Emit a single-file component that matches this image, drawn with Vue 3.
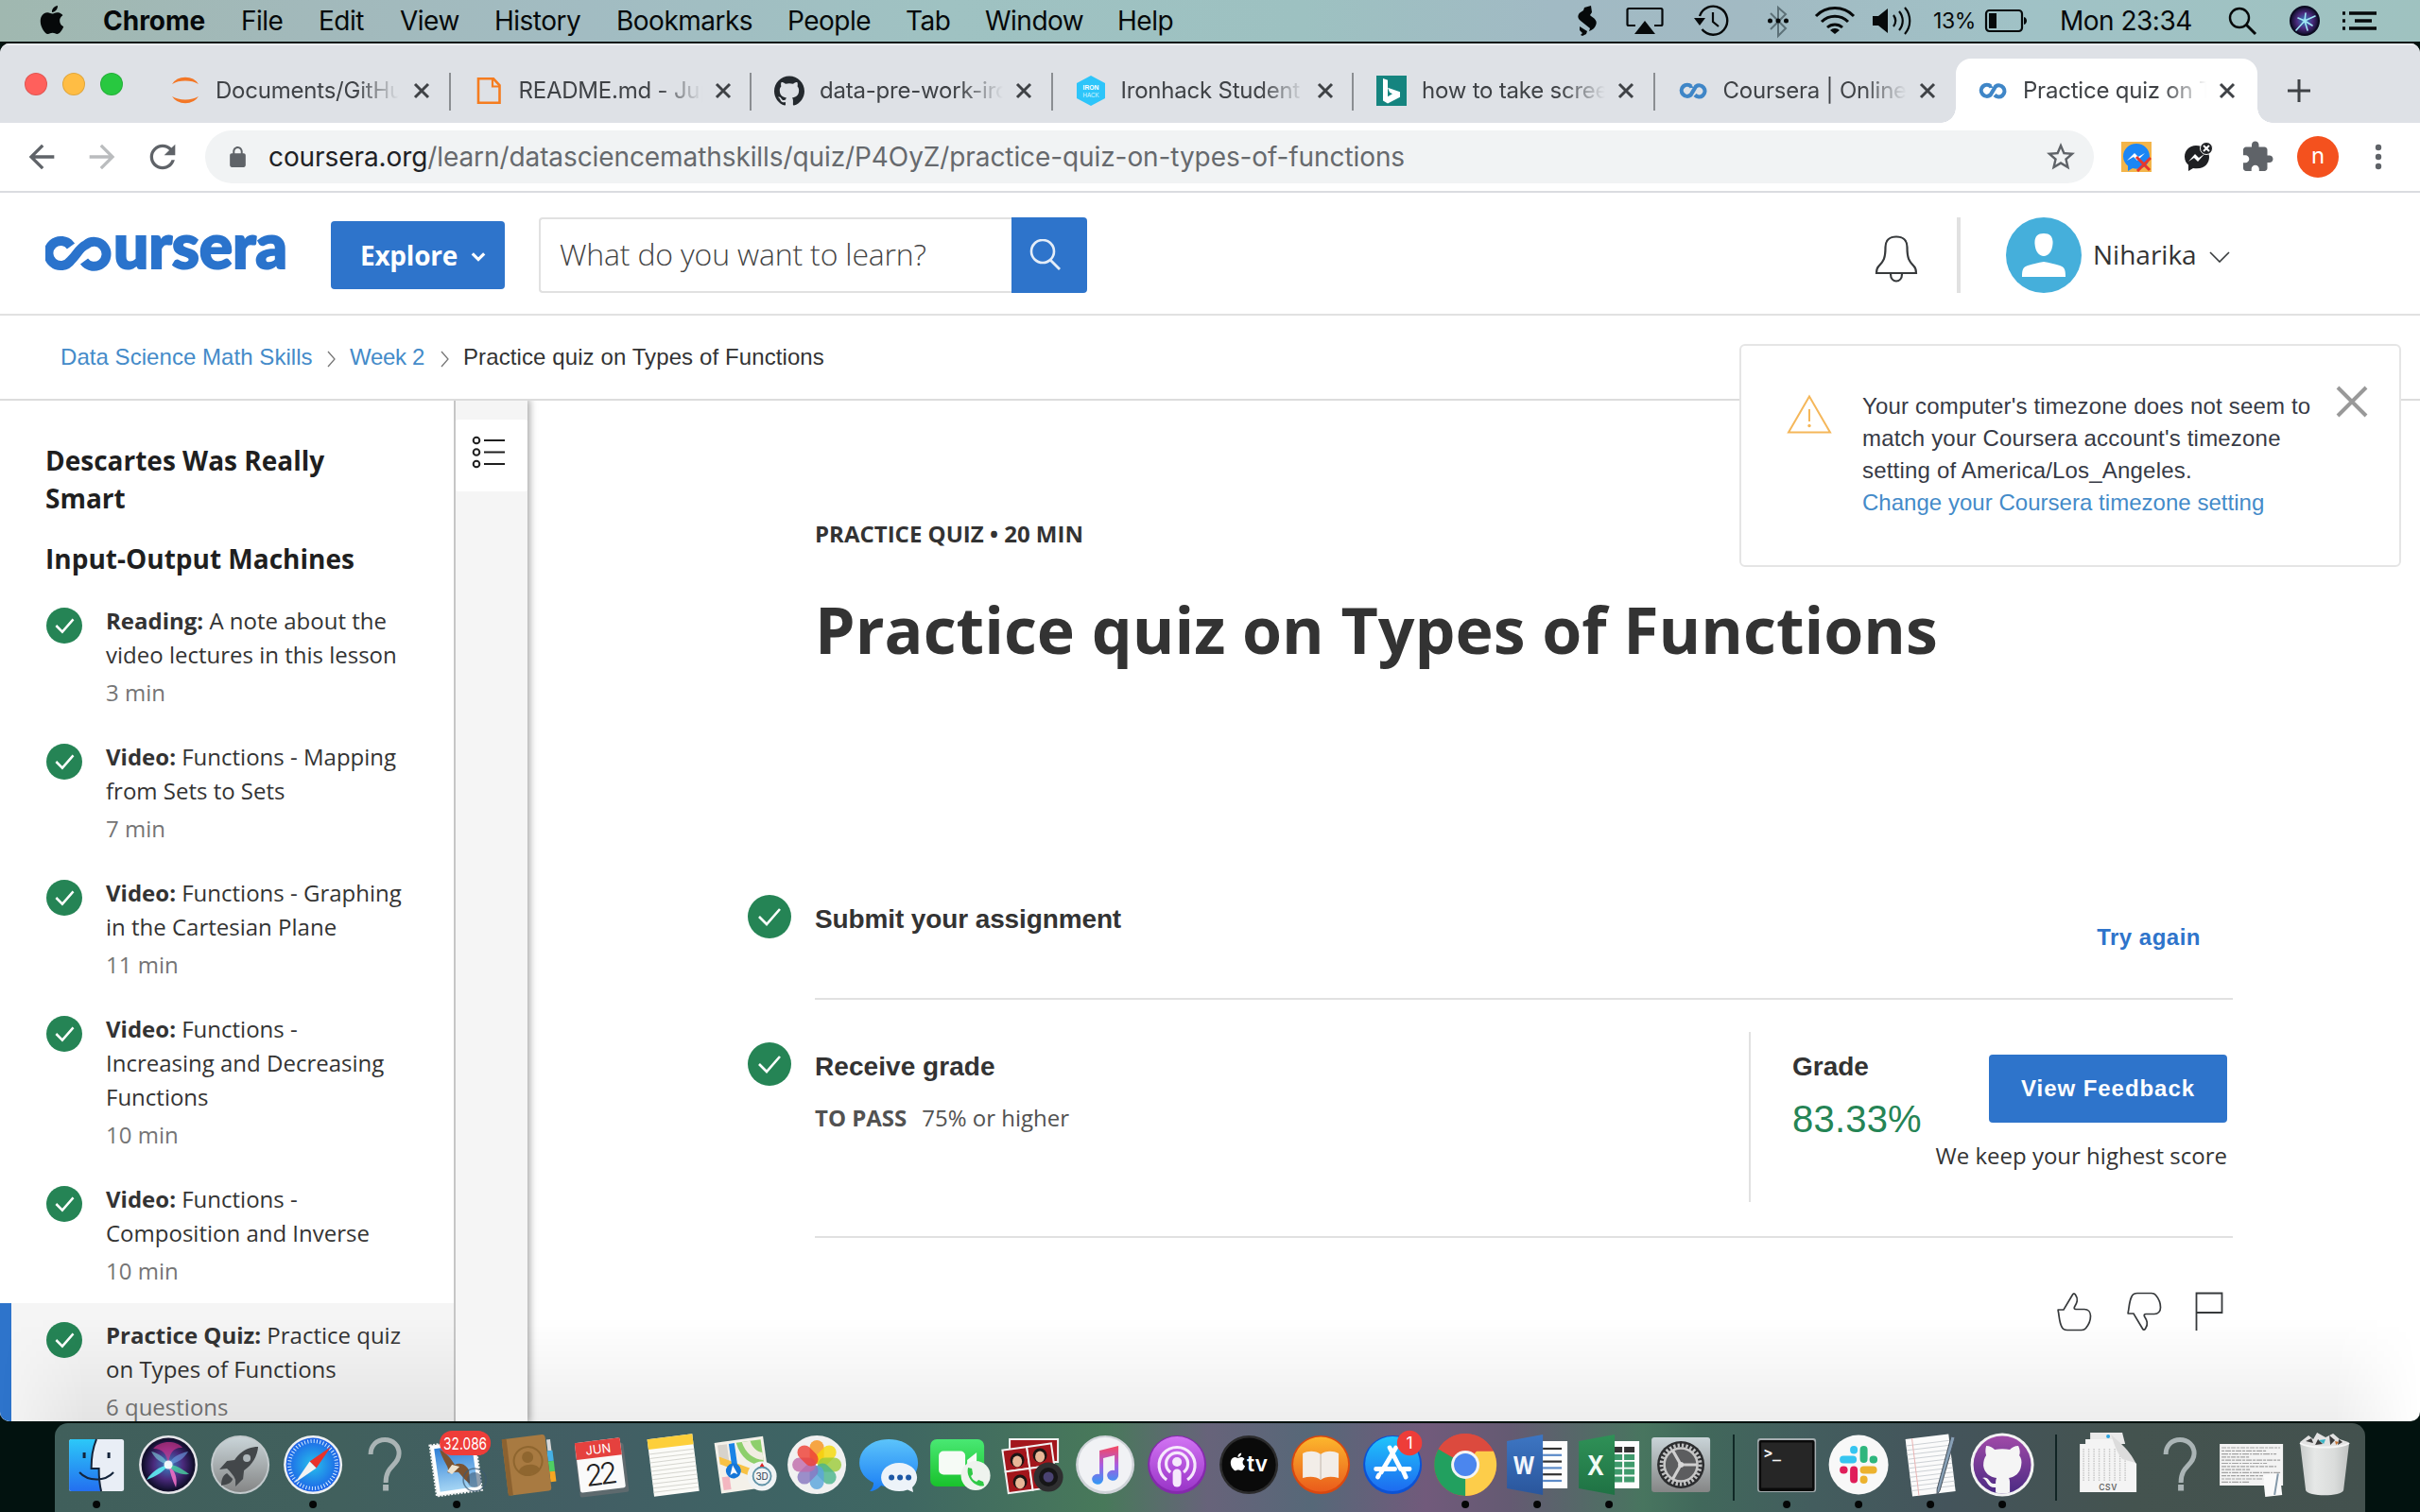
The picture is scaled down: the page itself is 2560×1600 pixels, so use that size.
<script setup>
const menus = ['Chrome', 'File', 'Edit', 'View', 'History', 'Bookmarks', 'People', 'Tab', 'Window', 'Help']

const tabs = [
  { icon: 'jupyter', title: 'Documents/GitHub' },
  { icon: 'file', title: 'README.md - Jupyter' },
  { icon: 'github', title: 'data-pre-work-ironhack' },
  { icon: 'ironhack', title: 'Ironhack Student Portal' },
  { icon: 'bing', title: 'how to take screenshot' },
  { icon: 'coursera', title: 'Coursera | Online Courses' },
  { icon: 'coursera', title: 'Practice quiz on Types', active: true }
]

const lessons = [
  { kind: 'Reading', text: 'A note about the\nvideo lectures in this lesson', meta: '3 min' },
  { kind: 'Video', text: 'Functions - Mapping\nfrom Sets to Sets', meta: '7 min' },
  { kind: 'Video', text: 'Functions - Graphing\nin the Cartesian Plane', meta: '11 min' },
  { kind: 'Video', text: 'Functions -\nIncreasing and Decreasing\nFunctions', meta: '10 min' },
  { kind: 'Video', text: 'Functions -\nComposition and Inverse', meta: '10 min' },
  { kind: 'Practice Quiz', text: 'Practice quiz\non Types of Functions', meta: '6 questions', current: true }
]

const dock = [
  { id: 'finder', run: true }, { id: 'siri' }, { id: 'launchpad' }, { id: 'safari', run: true }, { id: 'missing' },
  { id: 'mail', run: true }, { id: 'contacts' }, { id: 'calendar' }, { id: 'notes' }, { id: 'maps' }, { id: 'photos' },
  { id: 'messages' }, { id: 'facetime' }, { id: 'photobooth' }, { id: 'music' }, { id: 'podcasts' }, { id: 'tv' },
  { id: 'books' }, { id: 'appstore' }, { id: 'chrome', run: true }, { id: 'word', run: true }, { id: 'excel', run: true },
  { id: 'settings' }, { id: 'divider' }, { id: 'terminal', run: true }, { id: 'slack', run: true },
  { id: 'textedit', run: true }, { id: 'githubapp', run: true }, { id: 'divider' }, { id: 'csv' }, { id: 'missing' },
  { id: 'document' }, { id: 'trash' }
]

const range = (n) => Array.from({ length: n }, (_, i) => i)
const petals = ['#f7941d', '#f5d90a', '#9ccb3b', '#4cb58b', '#5aa5dc', '#8878c0', '#c06cab', '#ee4136']
const applePath = 'M12.152 6.896c-.948 0-2.415-1.078-3.96-1.04-2.04.027-3.91 1.183-4.961 3.014-2.117 3.675-.546 9.103 1.519 12.09 1.013 1.454 2.208 3.09 3.792 3.039 1.52-.065 2.09-.987 3.935-.987 1.831 0 2.35.987 3.96.948 1.637-.026 2.676-1.48 3.676-2.948 1.156-1.688 1.636-3.325 1.662-3.415-.039-.013-3.182-1.221-3.22-4.857-.026-3.04 2.48-4.494 2.597-4.559-1.429-2.09-3.623-2.324-4.39-2.376-2-.156-3.675 1.09-4.61 1.09zM15.53 3.83c.843-1.012 1.4-2.427 1.245-3.83-1.207.052-2.662.805-3.532 1.818-.78.896-1.454 2.338-1.273 3.714 1.338.104 2.715-.688 3.559-1.701'
</script>

<template>
  <div class="desktop">
    <header class="menubar">
      <svg class="apple" viewBox="0 0 24 24"><path :d="applePath" /></svg>
      <nav class="menus"><span v-for="m in menus" :key="m">{{ m }}</span></nav>
      <div class="status">
        <svg width="28" height="44" viewBox="0 0 28 44"><path d="M19 6l1 7-2 3 1 1c5 3 7 6 5 10-1 3-4 5-7 6l1-3-10-8c-4-3-3-7 0-9l3-2 1-3zM7 28l8 5-1 3-4 2-2-1 2-2-3-3z" fill="#06090a" /></svg>
        <svg width="44" height="44" viewBox="0 0 44 44" class="gap1"><path d="M12 27H5a1.500 1.500 0 0 1-1.500-1.500V10.500A1.500 1.500 0 0 1 5 9h34a1.500 1.500 0 0 1 1.500 1.500v15a1.500 1.500 0 0 1-1.500 1.500h-7" fill="none" stroke="#06090a" stroke-width="2.200" /><path d="M22 22l11 14H11z" fill="#06090a" /></svg>
        <svg width="42" height="44" viewBox="0 0 42 44" class="gap2"><path d="M8 17A15 15 0 1 1 10.500 31" fill="none" stroke="#06090a" stroke-width="2.400" /><path d="M2 19h12l-6 8z" fill="#06090a" /><path d="M22 13v10l6 5" fill="none" stroke="#06090a" stroke-width="2.200" /></svg>
        <svg width="30" height="44" viewBox="0 0 30 44" class="gap3"><path d="M7 14l16 16-8 8V8l8 7L7 31" fill="none" stroke="#5d7178" stroke-width="2" /><path d="M4 22a2.500 2.500 0 1 0 5 0 2.500 2.500 0 1 0-5 0zM12.500 22a2.500 2.500 0 1 0 5 0 2.500 2.500 0 1 0-5 0zM21 22a2.500 2.500 0 1 0 5 0 2.500 2.500 0 1 0-5 0z" fill="#06090a" /></svg>
        <svg width="46" height="44" viewBox="0 0 46 44" class="gap4"><g fill="none" stroke="#06090a" stroke-width="3"><path d="M3 17a28 28 0 0 1 40 0" /><path d="M9 23a20 20 0 0 1 28 0" /><path d="M15 29a12 12 0 0 1 16 0" /></g><path d="M18 32a7 7 0 0 1 10 0l-5 4z" fill="#06090a" /></svg>
        <svg width="50" height="44" viewBox="0 0 50 44" class="gap5"><path d="M3 17h6l10-8v26L9 27H3z" fill="#06090a" /><g fill="none" stroke="#06090a" stroke-width="2.200"><path d="M25 16c3 4 3 8 0 12M31 12c5 6 5 14 0 20M37 8c7 8 7 20 0 28" /></g></svg>
        <span class="pct">13%</span>
        <svg width="48" height="44" viewBox="0 0 48 44"><rect x="3" y="11" width="38" height="22" rx="3.500" fill="none" stroke="#06090a" stroke-width="2.200" /><rect x="6" y="14" width="8" height="16" fill="#06090a" /><path d="M43 18c4 1 4 7 0 8z" fill="#06090a" /></svg>
        <span class="clock">Mon 23:34</span>
        <svg width="34" height="44" viewBox="0 0 34 44"><circle cx="13" cy="19" r="10" fill="none" stroke="#06090a" stroke-width="2.400" /><path d="M20 26l10 10" stroke="#06090a" stroke-width="3" /></svg>
        <svg width="36" height="44" viewBox="0 0 36 44" class="gap6"><circle cx="18" cy="22" r="16" fill="#0b0a20" /><circle cx="18" cy="22" r="14" fill="url(#siriB)" /><path d="M18 22L9 32M18 22l11-5M18 22l-7-3M18 22l3 10M18 22l8 5M18 22l1-8" stroke="#9fe8f5" stroke-width="1.600" stroke-linecap="round" /></svg>
        <svg width="40" height="44" viewBox="0 0 40 44" class="gap7"><path d="M2 14h3M2 22h3M2 30h3M9 14h29M15 22h18M9 30h29" stroke="#06090a" stroke-width="3.600" /></svg>
      </div>
    </header>

    <main class="window">
      <div class="tabstrip">
        <div class="lights"><i class="red"></i><i class="yellow"></i><i class="green"></i></div>
        <div v-for="(t, i) in tabs" :key="i" class="tab" :class="{ active: t.active, divided: i < 5 }">
          <svg class="fav" viewBox="0 0 32 32">
            <template v-if="t.icon === 'jupyter'"><path d="M2 9a16 14 0 0 1 28 0A20 12 0 0 0 2 9zM2 22a16 14 0 0 0 28 0A20 12 0 0 1 2 22z" fill="#f37726" /></template>
            <template v-else-if="t.icon === 'file'"><path d="M5 3.300h16l6.500 7V28.700H5z" fill="none" stroke="#f57c1f" stroke-width="2.600" /><path d="M20 3v8.500h8" fill="none" stroke="#f57c1f" stroke-width="2.200" /></template>
            <template v-else-if="t.icon === 'github'"><path transform="scale(1.333)" d="M12 .297c-6.630 0-12 5.373-12 12 0 5.303 3.438 9.800 8.205 11.385.6.113.82-.258.82-.577 0-.285-.01-1.040-.015-2.040-3.338.724-4.042-1.610-4.042-1.610C4.422 18.070 3.633 17.700 3.633 17.700c-1.087-.744.084-.729.084-.729 1.205.084 1.838 1.236 1.838 1.236 1.070 1.835 2.809 1.305 3.495.998.108-.776.417-1.305.76-1.605-2.665-.3-5.466-1.332-5.466-5.930 0-1.310.465-2.380 1.235-3.220-.135-.303-.54-1.523.105-3.176 0 0 1.005-.322 3.300 1.230.96-.267 1.980-.399 3-.405 1.020.006 2.040.138 3 .405 2.280-1.552 3.285-1.230 3.285-1.230.645 1.653.24 2.873.12 3.176.765.84 1.230 1.910 1.230 3.220 0 4.610-2.805 5.625-5.475 5.920.42.36.81 1.096.81 2.220 0 1.606-.015 2.896-.015 3.286 0 .315.21.69.825.57C20.565 22.092 24 17.592 24 12.297c0-6.627-5.373-12-12-12" fill="#24292e" /></template>
            <template v-else-if="t.icon === 'ironhack'"><path d="M16 0l15 8v16l-15 8-15-8V8z" fill="#2dc5fa" /><text x="16" y="15" font-size="7.500" font-weight="700" text-anchor="middle" fill="#fff" textLength="17" lengthAdjust="spacingAndGlyphs">IRON</text><text x="16" y="22.500" font-size="7.500" text-anchor="middle" fill="#d9f5ff" textLength="17" lengthAdjust="spacingAndGlyphs">HACK</text></template>
            <template v-else-if="t.icon === 'bing'"><rect width="32" height="32" fill="#15847f" /><path d="M7 3l5 1.800v17.500l5-3-3-1.500-2-5 13 4.500v5.500L12 29.500l-5-3z" fill="#fff" /></template>
            <template v-else><path d="M14 11.500A6 6 0 1 0 13.500 20.500L19 11.500A6 6 0 1 1 18 20.500M14 13a2 2 0 0 0-1-1.500" fill="none" stroke="#3f86c7" stroke-width="4.200" /></template>
          </svg>
          <span class="title">{{ t.title }}</span>
          <svg class="x" viewBox="0 0 20 20"><path d="M3 3l14 14M17 3L3 17" stroke="#3f4246" stroke-width="3" /></svg>
        </div>
        <svg class="plus" viewBox="0 0 26 26"><path d="M13 1v24M1 13h24" stroke="#3f4246" stroke-width="3" /></svg>
      </div>

      <div class="toolbar">
        <svg class="nav" viewBox="0 0 24 24"><path fill="#5f6368" d="M20 11H7.830l5.590-5.590L12 4l-8 8 8 8 1.410-1.410L7.830 13H20v-2z" /></svg>
        <svg class="nav" viewBox="0 0 24 24"><path fill="#babcbe" d="M12 4l-1.410 1.410L16.170 11H4v2h12.170l-5.580 5.590L12 20l8-8z" /></svg>
        <svg class="nav" viewBox="0 0 24 24"><path fill="#5f6368" d="M17.650 6.350C16.200 4.900 14.210 4 12 4c-4.420 0-7.990 3.580-7.990 8s3.570 8 7.990 8c3.730 0 6.840-2.550 7.730-6h-2.080c-.82 2.330-3.040 4-5.650 4-3.310 0-6-2.690-6-6s2.690-6 6-6c1.660 0 3.140.69 4.220 1.780L13 11h7V4l-2.350 2.350z" /></svg>
        <div class="omnibox">
          <svg class="lock" viewBox="0 0 24 24"><path fill="#5f6368" d="M18 8h-1V6c0-2.760-2.240-5-5-5S7 3.240 7 6v2H6c-1.100 0-2 .9-2 2v10c0 1.100.9 2 2 2h12c1.100 0 2-.9 2-2V10c0-1.100-.9-2-2-2zM15.100 8H8.900V6c0-1.710 1.390-3.100 3.100-3.100s3.100 1.390 3.100 3.100v2z" /></svg>
          <span class="url"><b>coursera.org</b>/learn/datasciencemathskills/quiz/P4OyZ/practice-quiz-on-types-of-functions</span>
          <svg class="star" viewBox="0 0 24 24"><path fill="#5f6368" d="M22 9.240l-7.190-.62L12 2 9.190 8.630 2 9.240l5.460 4.730L5.820 21 12 17.270 18.180 21l-1.630-7.030L22 9.240zM12 15.400l-3.760 2.270 1-4.280-3.320-2.880 4.380-.38L12 6.100l1.710 4.040 4.380.38-3.320 2.880 1 4.280L12 15.400z" /></svg>
        </div>
        <svg class="ext e1" viewBox="0 0 32 32"><rect width="32" height="32" fill="#f3b54a" /><path d="M16 2C8 2 2 8 2 15.500c0 4 2 7.500 5 10V31l5-3c12 3 18-5 18-12.500C30 8 24 2 16 2z" fill="#1b86f5" /><path d="M6 20l8-8 4 4 7-4-8 8-4-4z" fill="#fff" /><path d="M16 16l14 14M31 17L17 31" stroke="#e8362c" stroke-width="3" /></svg>
        <svg class="ext e2" viewBox="0 0 32 32"><path d="M14 4C7 4 2 9 2 16c0 4 2 7 4 8.500V31l5-3c12 2 17-5 17-12C28 9 22 4 14 4z" fill="#1f2023" /><path d="M6 21l7-8 4 4 6-4-7 8-4-4z" fill="#fff" /><circle cx="25" cy="7" r="6.500" fill="#1f2023" stroke="#fff" stroke-width="1" /><path d="M22 4l6 6M28 4l-6 6" stroke="#fff" stroke-width="2" /></svg>
        <svg class="ext e3" viewBox="0 0 24 24"><path fill="#5f6368" d="M20.500 11H19V7c0-1.100-.9-2-2-2h-4V3.500C13 2.120 11.880 1 10.500 1S8 2.120 8 3.500V5H4c-1.100 0-1.990.9-1.990 2v3.800H3.500c1.490 0 2.700 1.210 2.700 2.700s-1.210 2.700-2.700 2.700H2V20c0 1.100.9 2 2 2h3.800v-1.500c0-1.490 1.210-2.700 2.700-2.700 1.490 0 2.700 1.210 2.700 2.700V22H17c1.100 0 2-.9 2-2v-4h1.500c1.380 0 2.500-1.120 2.500-2.500S21.880 11 20.500 11z" /></svg>
        <span class="profile">n</span>
        <svg class="dots" viewBox="0 0 8 28"><circle cx="4" cy="4" r="3.200" /><circle cx="4" cy="14" r="3.200" /><circle cx="4" cy="24" r="3.200" /></svg>
      </div>

      <div class="page">
        <div class="topnav">
          <div class="logo">
            <svg viewBox="0 0 72 40"><path d="M27 12.500A13 13 0 1 0 27 27.500C33 22 36 14 43 11A13 13 0 1 1 41 28.500" fill="none" stroke="#2a73cc" stroke-width="10" /></svg>
            <span>ursera</span>
          </div>
          <button class="explore">Explore<svg viewBox="0 0 18 12"><path d="M2 2.500l7 7 7-7" fill="none" stroke="#fff" stroke-width="3.600" /></svg></button>
          <div class="search">
            <div class="field">What do you want to learn?</div>
            <button><svg viewBox="0 0 34 34"><circle cx="14" cy="13" r="12" fill="none" stroke="#e4edf8" stroke-width="2.600" /><path d="M22 22l10 10" stroke="#e4edf8" stroke-width="2.800" /></svg></button>
          </div>
          <svg class="bell" viewBox="0 0 46 50"><path d="M23 1.500c-7 0-11.500 4-11.500 11 0 13-2.500 15-7 20C2 35 2 37 2 40h42c0-3 0-5-2.500-7.500-4.500-5-7-7-7-20 0-7-4.500-11-11.500-11z" fill="none" stroke="#373a3c" stroke-width="2.200" /><path d="M17 41c0 5 3 7.500 6 7.500s6-2.500 6-7.500" fill="none" stroke="#373a3c" stroke-width="2.200" /></svg>
          <div class="vr"></div>
          <svg class="avatar" viewBox="0 0 80 80"><circle cx="40" cy="40" r="40" fill="#45afdb" /><path d="M40 17c7 0 10 4 9.500 11-.6 8-4.500 13-9.500 13s-9-5-9.500-13C30 21 33 17 40 17zM17 63c0-8 1-10 6-12 6-2 11-3 17-4 6 1 11 2 17 4 5 2 6 4 6 12z" fill="#fff" /></svg>
          <span class="user">Niharika</span>
          <svg class="chev" viewBox="0 0 22 12"><path d="M1 1l10 10L21 1" fill="none" stroke="#373a3c" stroke-width="1.600" /></svg>
        </div>

        <div class="crumbs">
          <a>Data Science Math Skills</a>
          <svg viewBox="0 0 10 18"><path d="M1 1l7 8-7 8" fill="none" stroke="#777" stroke-width="1.300" /></svg>
          <a class="week">Week 2</a>
          <svg viewBox="0 0 10 18"><path d="M1 1l7 8-7 8" fill="none" stroke="#777" stroke-width="1.300" /></svg>
          <span>Practice quiz on Types of Functions</span>
        </div>

        <div class="body">
          <aside class="sidebar">
            <h2 class="first">Descartes Was Really<br />Smart</h2>
            <h2>Input-Output Machines</h2>
            <div v-for="(l, i) in lessons" :key="i" class="lesson" :class="{ current: l.current }">
              <svg class="check" viewBox="0 0 46 46"><circle cx="23" cy="23" r="23" fill="#258455" /><path d="M12.500 23l8 8 14-16" fill="none" stroke="#fff" stroke-width="3" /></svg>
              <div>
                <p><b>{{ l.kind }}:</b> {{ l.text }}</p>
                <small>{{ l.meta }}</small>
              </div>
            </div>
          </aside>
          <div class="rail">
            <div class="tile"><svg viewBox="0 0 36 36"><g fill="none" stroke="#1f1f1f" stroke-width="2"><circle cx="5" cy="5" r="3.300" /><circle cx="5" cy="17.500" r="3.300" /><circle cx="5" cy="30" r="3.300" /><path d="M13 5h22M13 17.500h22M13 30h22" stroke-width="2.200" /></g></svg></div>
          </div>
          <section class="content">
            <div class="eyebrow">PRACTICE QUIZ • 20 MIN</div>
            <h1>Practice quiz on Types of Functions</h1>
            <div class="step one">
              <svg class="check" viewBox="0 0 46 46"><circle cx="23" cy="23" r="23" fill="#258455" /><path d="M12 23l8 8 14-16" fill="none" stroke="#fff" stroke-width="2.600" /></svg>
              <div class="row"><h3>Submit your assignment</h3><a class="again">Try again</a></div>
            </div>
            <div class="step two">
              <svg class="check" viewBox="0 0 46 46"><circle cx="23" cy="23" r="23" fill="#258455" /><path d="M12 23l8 8 14-16" fill="none" stroke="#fff" stroke-width="2.600" /></svg>
              <div class="row">
                <div class="receive"><h3>Receive grade</h3><p><b>TO PASS</b>75% or higher</p></div>
                <div class="grade">
                  <div class="score"><h3>Grade</h3><span>83.33%</span></div>
                  <div class="feedback"><button>View Feedback</button><span>We keep your highest score</span></div>
                </div>
              </div>
            </div>
            <div class="react">
              <svg width="38" height="42" viewBox="0 0 38 42"><path d="M1.500 19H8L17.500 3c.8-1.500 2-1.500 3 0 3.500 5 1.500 9-1 13-.8 1.500 0 2.500 1.500 2.500h9c4 0 6.500 3 6.500 7 0 5-2.500 10-5 13-1 1.300-2.500 2-4.500 2H12c-3 0-5-1-6-3.500-3-6-2.500-12-4-18z" fill="none" stroke="#373a3c" stroke-width="1.700" /></svg>
              <svg class="down" width="38" height="42" viewBox="0 0 38 42"><path d="M1.500 19H8L17.500 3c.8-1.500 2-1.500 3 0 3.500 5 1.500 9-1 13-.8 1.500 0 2.500 1.500 2.500h9c4 0 6.500 3 6.500 7 0 5-2.500 10-5 13-1 1.300-2.500 2-4.500 2H12c-3 0-5-1-6-3.500-3-6-2.500-12-4-18z" fill="none" stroke="#373a3c" stroke-width="1.700" /></svg>
              <svg width="30" height="42" viewBox="0 0 30 42"><path d="M1.500 41V1.500h27v20.500H1.500" fill="none" stroke="#373a3c" stroke-width="1.800" /></svg>
            </div>
          </section>
        </div>

        <div class="toast">
          <svg class="warn" viewBox="0 0 48 42"><path d="M24 2.500L46 40.500H2z" fill="none" stroke="#f5b75a" stroke-width="2" /><path d="M24 16v13" stroke="#f5b75a" stroke-width="2" /><circle cx="24" cy="33.500" r="1.700" fill="#f5b75a" /></svg>
          <div class="msg"><span>Your computer's timezone does not seem to</span><span>match your Coursera account's timezone</span><span>setting of America/Los_Angeles.</span><a>Change your Coursera timezone setting</a></div>
          <svg class="close" viewBox="0 0 34 34"><path d="M2 2l30 30M32 2L2 32" stroke="#999" stroke-width="4" /></svg>
        </div>
        <div class="shade"></div>
      </div>
    </main>

    <footer class="dock">
      <template v-for="(d, i) in dock" :key="i">
        <i v-if="d.id === 'divider'" class="divider"></i>
        <svg v-else class="app" viewBox="0 0 76 94">
          <template v-if="d.id === 'finder'">
            <rect x="9" y="17" width="58" height="55" rx="2.500" fill="#e9eef6" /><path d="M11.500 17H38c-4 9-5.500 20-5.500 31h8c0 8 .5 16 2.500 24H11.500A2.500 2.500 0 0 1 9 69.500v-50A2.500 2.500 0 0 1 11.500 17z" fill="url(#finderA)" />
            <path d="M25 31v6M51 31v6" stroke="#14243a" stroke-width="3" /><path d="M20 52c9 10 27 10 36 0M38 17c-4 9-5.500 20-5.500 31h8c0 8 .5 16 2.500 24" fill="none" stroke="#14243a" stroke-width="2" />
          </template>
          <template v-else-if="d.id === 'siri'">
            <circle cx="38" cy="44" r="31" fill="#e6e6ea" /><circle cx="38" cy="44" r="28.500" fill="#14102e" /><circle cx="38" cy="44" r="26" fill="url(#siriB)" />
            <path d="M38 44C28 46 20 52 15 60c10-4 18-8 23-16z" fill="#5ff0f4" opacity=".9" /><path d="M38 44c10-2 16-6 21-14-10 2-17 6-21 14z" fill="#6ea4e8" opacity=".6" /><path d="M38 44c2 8 4 16 8 24 2-10-1-18-8-24z" fill="#ee6fc4" opacity=".9" /><path d="M38 44c-4-8-10-12-18-14 4 8 10 12 18 14z" fill="#7fd6e0" opacity=".6" /><path d="M38 44c8 0 14 4 22 10-10 1-18-3-22-10z" fill="#49d2a0" opacity=".8" /><path d="M22 27c8-9 24-9 31-1-9-1-14 5-15 18-2-12-6-17-16-17z" fill="#e0368f" opacity=".6" /><circle cx="38" cy="44" r="4.500" fill="#fff" opacity=".9" />
          </template>
          <template v-else-if="d.id === 'launchpad'">
            <circle cx="38" cy="44" r="31" fill="#c3cacd" /><circle cx="38" cy="44" r="29" fill="url(#silver)" />
            <path d="M57 25c-10 0-19 5-25 14l-8 1-8 9 8-1c4 4 7 7 9 12l0 7 8-8 1-9c9-6 14-15 15-25z" fill="#43474a" /><circle cx="45" cy="37" r="4" fill="#aeb6ba" /><path d="M24 53c-5 2-6 8-6 13 5-1 11-2 12-7z" fill="#43474a" />
          </template>
          <template v-else-if="d.id === 'safari'">
            <circle cx="38" cy="44" r="31" fill="#eef0f2" /><circle cx="38" cy="44" r="28.500" fill="url(#safariA)" /><circle cx="38" cy="44" r="25" fill="none" stroke="#d8ecff" stroke-width="4" stroke-dasharray="1 2.270" />
            <path d="M57 25L41.500 47.500l-7-7z" fill="#e8322b" /><path d="M19 63l15.500-22.500 7 7z" fill="#f2f2f2" />
          </template>
          <template v-else-if="d.id === 'missing'"><path d="M23 33c0-9 6-15.500 15-15.500S53 24 53 32c0 13-14 12-14 31" fill="none" stroke="#aab4b5" stroke-width="5" /><rect x="36" y="65" width="6" height="6.500" fill="#aab4b5" /></template>
          <template v-else-if="d.id === 'mail'">
            <g transform="rotate(-8 38 46)"><rect x="13" y="20" width="48" height="54" fill="#fff" stroke="#f4f4f4" stroke-width="2.500" stroke-dasharray="2 1.500" /><rect x="17" y="24" width="40" height="46" fill="url(#sky)" /></g>
            <path d="M20 28c8 4 12 10 16 16 6-3 12 0 15 6l1 14c-6-4-8-8-12-12-5-1-8 2-12 0 4-4-4-10-8-24z" fill="#7c5330" /><path d="M33 44l8 2-8 8-5-3z" fill="#ede3cf" /><circle cx="57" cy="60" r="12" fill="none" stroke="#3c5a73" stroke-width="1.500" opacity=".7" /><circle cx="57" cy="60" r="8" fill="#35506b" opacity=".55" />
            <rect x="20" y="8" width="54" height="26" rx="13" fill="#ee3d39" /><text x="47" y="27.500" font-size="17.500" text-anchor="middle" fill="#fff" textLength="46" lengthAdjust="spacingAndGlyphs">32.086</text>
          </template>
          <template v-else-if="d.id === 'contacts'"><g transform="rotate(-7 38 44)"><path d="M60 20h4v12h-4z" fill="#d8d8d8" /><path d="M59 32h6v11h-6z" fill="#45b0e5" /><path d="M59 43h6v11h-6z" fill="#4fcf63" /><path d="M59 54h6v11h-6z" fill="#f6a623" /><rect x="13" y="14" width="46" height="60" rx="3" fill="#a87a41" /><path d="M13 14h5v60h-5z" fill="#8c6230" /><circle cx="38" cy="40" r="15" fill="none" stroke="#8f662f" stroke-width="2" /><circle cx="38" cy="36" r="6" fill="#8f662f" /><path d="M27 50c2-8 20-8 22 0-6 6-16 6-22 0z" fill="#8f662f" /></g></template>
          <template v-else-if="d.id === 'calendar'"><g transform="rotate(-7 38 46)"><rect x="13" y="24" width="52" height="52" rx="2" fill="#5e6a6e" /><rect x="14" y="18" width="48" height="53" rx="2" fill="#fafafa" /><path d="M14 18h48v18H14z" fill="#e5413e" /><text x="38" y="32" font-size="13" text-anchor="middle" fill="#fff">JUN</text><text x="38" y="65" font-size="31" font-weight="300" text-anchor="middle" fill="#222" textLength="34">22</text></g></template>
          <template v-else-if="d.id === 'notes'"><g transform="rotate(-7 38 44)"><rect x="14" y="14" width="48" height="61" fill="#fbfbf8" /><path d="M14 14h48v11H14z" fill="#fdcf3a" /><path v-for="n in range(10)" :key="n" :d="`M14 ${30 + n * 4.500}h48`" stroke="#d5d5cf" stroke-width="1" /></g></template>
          <template v-else-if="d.id === 'maps'"><g transform="rotate(-8 36 44)"><rect x="9" y="17" width="52" height="54" fill="#f4f1ea" /><path d="M12 20h10v20H12z" fill="#d7d3cc" /><path d="M32 20h26v28C44 46 34 36 32 20z" fill="#8ecf6c" /><path d="M38 20c2 12 10 20 20 22v-8c-6-2-10-7-11-14z" fill="#f1ede2" /><path d="M12 40l46 26v-9L12 32z" fill="#f8c245" /><path d="M12 54h8v14h-8z" fill="#f3b6c0" /><path d="M24 20h6v30h-6z" fill="#1a83e6" /><circle cx="25" cy="49" r="8" fill="#1577d8" /><path d="M25 43l4 10-4-2-4 2z" fill="#fff" /></g><circle cx="56" cy="56" r="15.500" fill="#f0f3f4" /><circle cx="56" cy="56" r="9.500" fill="none" stroke="#5f92a7" stroke-width="1.800" /><text x="56" y="60" font-size="10" text-anchor="middle" fill="#345">3D</text><path d="M56 42l2.500 4h-5z" fill="#d22" /></template>
          <template v-else-if="d.id === 'photos'"><circle cx="38" cy="44" r="31" fill="#f1f1f1" /><rect v-for="(c, n) in petals" :key="c" x="30.500" y="18" width="15" height="25" rx="7.500" :fill="c" opacity=".82" :transform="`rotate(${n * 45} 38 44)`" /></template>
          <template v-else-if="d.id === 'messages'"><path d="M38 17c17 0 31 10 31 25S55 67 38 67c-3 0-6 0-8-1-4 4-8 6-12 6 3-3 4-6 4-9C13 59 7 51 7 42c0-15 14-25 31-25z" fill="url(#msgA)" /><path d="M49 42c11 0 19 7 19 15.500 0 4-2 8-5 10.500l1 5-6-2.500c-3 1-6 1.500-9 1.500-11 0-19-6-19-14.500S38 42 49 42z" fill="#edf3f9" /><circle cx="41" cy="57.500" r="3" fill="#1d58a5" /><circle cx="50" cy="57.500" r="3" fill="#1d58a5" /><circle cx="59" cy="57.500" r="3" fill="#1d58a5" /></template>
          <template v-else-if="d.id === 'facetime'"><rect x="6" y="17" width="57" height="50" rx="7" fill="url(#ftA)" /><rect x="15" y="29.500" width="28" height="25" rx="5" fill="#f6fbf6" /><path d="M45 39l10-8v22l-10-8z" fill="#f6fbf6" /><circle cx="54" cy="55.500" r="15.500" fill="#eef3ee" /><path d="M46 47l4 1 1 6-2 2c1 3 3 5 6 6l2-2 5 2 1 4c-8 3-20-8-17-19z" fill="#2fc946" /></template>
          <template v-else-if="d.id === 'photobooth'"><g stroke="#f2f2f2" stroke-width="2"><rect x="14" y="17" width="51" height="24" fill="#a3161c" /><g transform="rotate(-8 34 46)"><rect x="9" y="25" width="26" height="23" fill="#a3161c" /><rect x="35" y="25" width="26" height="23" fill="#a3161c" /><rect x="9" y="48" width="26" height="23" fill="#a3161c" /><rect x="35" y="48" width="26" height="23" fill="#a3161c" /></g></g><g v-for="p in [[22, 39], [46, 34], [25, 62]]" :key="p[0]"><circle :cx="p[0]" :cy="p[1]" r="7.500" fill="#1c1514" /><ellipse :cx="p[0]" :cy="p[1] + 1.500" rx="5" ry="6" fill="#e9b798" /></g><circle cx="55" cy="57" r="15.500" fill="#2f2f30" /><circle cx="55" cy="57" r="10" fill="#161617" /><circle cx="55" cy="57" r="5.500" fill="#4a4372" /></template>
          <template v-else-if="d.id === 'music'"><circle cx="38" cy="44" r="31" fill="#cfd3d8" /><circle cx="38" cy="43.500" r="28.500" fill="#f1f2f5" /><path d="M32 29l20-5v31a6 5.500 0 1 1-4-5V34l-12 3v22a6 5.500 0 1 1-4-5z" fill="url(#musicA)" /></template>
          <template v-else-if="d.id === 'podcasts'"><circle cx="38" cy="44" r="31" fill="#8529ad" /><circle cx="38" cy="43" r="29" fill="url(#podA)" /><g fill="none" stroke="#f6e9fc" stroke-width="3.200"><path d="M27 60a19 19 0 1 1 22 0M31 52a11.500 11.500 0 1 1 14 0" /></g><circle cx="38" cy="41" r="5" fill="#f6e9fc" /><rect x="33.500" y="48.500" width="9" height="19" rx="4.500" fill="#f6e9fc" /></template>
          <template v-else-if="d.id === 'tv'"><circle cx="38" cy="44" r="31" fill="#2b2b2c" /><circle cx="38" cy="44" r="28.500" fill="#0a0a0a" /><path :d="applePath" transform="translate(17 31.500) scale(.78)" fill="#fff" /><text x="36" y="51" font-size="23" font-weight="600" fill="#fff" textLength="22">tv</text></template>
          <template v-else-if="d.id === 'books'"><circle cx="38" cy="44" r="31" fill="#d9480f" /><circle cx="38" cy="43.500" r="29" fill="url(#bookA)" /><path d="M38 33c-5-4-13-4-19-1v26c7-2 14-2 19 2 5-4 12-4 19-2V32c-6-3-14-3-19 1z" fill="#f2ede8" /><path d="M38 33v27" stroke="#c9bfb6" stroke-width="1.200" /></template>
          <template v-else-if="d.id === 'appstore'"><circle cx="38" cy="44" r="31" fill="#0c52d4" /><circle cx="38" cy="43" r="29" fill="url(#storeA)" /><path d="M35 26L46.500 48.500M41.500 26L26 52M20.500 48.500h20M49 48.500h7M49 50l3 7M23.500 55l-1 2" stroke="#fff" stroke-width="4.800" stroke-linecap="round" /><circle cx="56" cy="21" r="13.200" fill="#ee3d39" /><text x="56" y="27" font-size="17.500" text-anchor="middle" fill="#fff">1</text></template>
          <template v-else-if="d.id === 'chrome'"><circle cx="38" cy="44" r="33" fill="#e04a3d" /><path d="M38 44L9.500 27.500A33 33 0 0 0 38 77l8-14z" fill="#22a05f" /><path d="M38 44l12-14.500h17.700A33 33 0 0 1 38 77z" fill="#fdcd4a" /><path d="M9.500 27.500A33 33 0 0 1 67.700 29.500H38z" fill="#dc4a3e" /><circle cx="38" cy="44" r="15" fill="#f4f4f4" /><circle cx="38" cy="44" r="12" fill="#4b86ee" /></template>
          <template v-else-if="d.id === 'word'"><rect x="38" y="19" width="32" height="50" fill="#fdfdfd" /><path v-for="n in range(6)" :key="n" :d="`M44 ${27 + n * 6.800}h20`" :stroke="n % 2 ? '#5b8ac8' : '#333'" stroke-width="2.200" /><path d="M6 19l38-7v64L6 69z" fill="url(#wordA)" /><text x="24" y="54" font-size="26" font-weight="700" text-anchor="middle" fill="#f2f6fc" textLength="23" lengthAdjust="spacingAndGlyphs">W</text></template>
          <template v-else-if="d.id === 'excel'"><rect x="38" y="19" width="32" height="50" fill="#fdfdfd" /><path d="M42 25h10v6H42zM54 25h11v6H54z" fill="#333" /><path v-for="n in range(4)" :key="n" :d="`M42 ${33 + n * 7.800}h10v6H42zM54 ${33 + n * 7.800}h11v6H54z`" fill="#3f9a6c" /><path d="M6 19l38-7v64L6 69z" fill="url(#xlA)" /><text x="24" y="55" font-size="29" font-weight="700" text-anchor="middle" fill="#f2fcf6" textLength="18" lengthAdjust="spacingAndGlyphs">X</text></template>
          <template v-else-if="d.id === 'settings'"><rect x="7" y="15" width="62" height="58" rx="3" fill="url(#silver)" /><circle cx="38" cy="44" r="25" fill="#2c2d2f" /><circle cx="38" cy="44" r="20.500" fill="none" stroke="#bfc0c1" stroke-width="4" stroke-dasharray="2.400 2" /><circle cx="38" cy="44" r="17.500" fill="#5c5d5f" stroke="#c8c8c8" stroke-width="2.600" /><path d="M38 44h17M38 44l-8.500-15M38 44l-8.500 15" stroke="#d0d0d0" stroke-width="3.200" /><circle cx="38" cy="44" r="3" fill="#d8d8d8" /></template>
          <template v-else-if="d.id === 'terminal'"><rect x="7" y="16" width="62" height="57" rx="3" fill="#a5adb0" /><rect x="8.500" y="18" width="59" height="54" rx="2" fill="#0a0a0a" /><rect x="11" y="20.500" width="54" height="48" fill="#262626" /><text x="14" y="37" font-size="15" font-weight="700" class="mono" fill="#f5f5f5">&gt;_</text></template>
          <template v-else-if="d.id === 'slack'"><circle cx="38" cy="44" r="31.500" fill="#f8f8f8" /><g stroke-width="8" stroke-linecap="round"><path d="M22 38.500h10M33 28v.5" stroke="#36c5f0" /><path d="M43.500 28v10M54 38.500h-.5" stroke="#2eb67d" /><path d="M43.500 49.500h10M43.500 60v-.5" stroke="#ecb22e" /><path d="M33 49.500v10M22 49.500h.5" stroke="#e01e5a" /></g></template>
          <template v-else-if="d.id === 'textedit'"><g transform="rotate(-7 38 44)"><rect x="15" y="14" width="46" height="61" fill="#fbfbfb" /><path v-for="n in range(11)" :key="n" :d="`M15 ${21 + n * 4.800}h46`" stroke="#ccd0d4" stroke-width="1" /><path d="M22 14v61" stroke="#e9b3b3" stroke-width="1" /></g><path d="M60 14l4 1-16 56-3 5 0-6z" fill="#87a0b6" stroke="#48525c" stroke-width="1" /></template>
          <template v-else-if="d.id === 'githubapp'"><circle cx="38" cy="44" r="33.500" fill="#f3f3f3" /><circle cx="38" cy="44" r="30.500" fill="url(#ghA)" /><path d="M21 24c4 0 7 2 9 4 5-1 11-1 16 0 2-2 5-4 9-4 2 4 2 8 1 10 2 3 3 6 2 11-1 8-7 12-13 13 1 2 1 4 1 6v9.500a30 30 0 0 1-15 0V68c-9 1-9-9-14-10 4-2 7 2 9 5 1 1 3 1 5 1 0-2 0-4 1-6-7-1-13-5-14-13 0-5 1-8 3-11-1-3-1-6 0-10z" fill="#f5f5f5" /></template>
          <template v-else-if="d.id === 'csv'"><path d="M19 10h34l3 12H19z" fill="#e9e9e9" /><path d="M8 22h6v-5h30l11 12 13 14v30H8z" fill="#f4f4f4" /><circle cx="38" cy="14" r="2" fill="#29a3e0" /><path v-for="n in range(9)" :key="n" :d="`M${12 + n * 5.500} 27v34`" stroke="#c6c6c6" stroke-width="1.400" stroke-dasharray="1.500 1" /><path d="M41 12c4 12 6 18 12 26l14 4C60 28 52 22 41 12z" fill="#dcdcdc" /><text x="38" y="70.500" font-size="8.500" font-weight="600" text-anchor="middle" fill="#666" letter-spacing=".5">CSV</text></template>
          <template v-else-if="d.id === 'document'"><rect x="4" y="22" width="67" height="44" fill="#f3f3f3" /><path v-for="n in range(12)" :key="n" :d="`M6 ${26 + n * 3.300}h${[62, 48, 58, 30][n % 4]}`" stroke="#a2a2a2" stroke-width="1.200" :stroke-dasharray="['5 1 3 1', '3 1 6 1', '7 1 2 1'][n % 3]" /><g transform="rotate(-6 60 66)"><rect x="51" y="54" width="18" height="23" fill="#fafafa" /><path d="M67 54l-6 22" stroke="#8499aa" stroke-width="2" /></g></template>
          <template v-else-if="d.id === 'trash'"><path d="M12 20l9-7 5 4 4-7 9 5 8-4 7 6 9 3-4 9H17z" fill="#e2e2e2" /><path d="M18 19l6-3 2 5zM31 17l5 5-8 1zM43 13l6 5-5 5zM53 17l4 3-5 3z" fill="#3c3c3c" /><path d="M32 18l7-1-2 5z" fill="#3bb5c6" /><path d="M49 19l4 1-3 3z" fill="#c4702f" /><path d="M12 21c8 6 44 6 52 0l-6 50c-2 7-38 7-40 0z" fill="url(#trashA)" /><path d="M12 21c8 6 44 6 52 0" fill="none" stroke="#f6f6f6" stroke-width="2" /></template>
          <circle v-if="d.run" cx="38" cy="86" r="4" fill="#040606" />
        </svg>
      </template>
    </footer>

    <svg width="0" height="0" class="defs">
      <defs>
        <radialGradient id="siriB"><stop offset="0" stop-color="#7fc9e4" /><stop offset=".25" stop-color="#3f5fa6" /><stop offset=".6" stop-color="#4a2a7c" /><stop offset="1" stop-color="#171236" /></radialGradient>
        <linearGradient id="finderA" x2="0" y2="1"><stop offset="0" stop-color="#2cc8f8" /><stop offset="1" stop-color="#236ff0" /></linearGradient>
        <linearGradient id="silver" x2="0" y2="1"><stop offset="0" stop-color="#c9d4d8" /><stop offset="1" stop-color="#858686" /></linearGradient>
        <linearGradient id="trashA"><stop offset="0" stop-color="#c9cccb" /><stop offset=".3" stop-color="#e6e8e7" /><stop offset=".7" stop-color="#dadcdb" /><stop offset="1" stop-color="#bfc2c1" /></linearGradient>
        <radialGradient id="safariA"><stop offset="0" stop-color="#27c0ec" /><stop offset="1" stop-color="#1d62e6" /></radialGradient>
        <linearGradient id="sky" x2="0" y2="1"><stop offset="0" stop-color="#2f7fd6" /><stop offset="1" stop-color="#a5d5f4" /></linearGradient>
        <linearGradient id="msgA" x2="0" y2="1"><stop offset="0" stop-color="#5cc4fb" /><stop offset="1" stop-color="#1a7df4" /></linearGradient>
        <linearGradient id="ftA" x2="0" y2="1"><stop offset="0" stop-color="#49e873" /><stop offset="1" stop-color="#19c22c" /></linearGradient>
        <linearGradient id="musicA" x2="0" y2="1"><stop offset="0" stop-color="#f6485f" /><stop offset=".5" stop-color="#a95be0" /><stop offset="1" stop-color="#2f9af5" /></linearGradient>
        <linearGradient id="podA" x2="0" y2="1"><stop offset="0" stop-color="#d274f3" /><stop offset="1" stop-color="#9a35c8" /></linearGradient>
        <linearGradient id="bookA" x2="0" y2="1"><stop offset="0" stop-color="#fcb72d" /><stop offset="1" stop-color="#ea5b1b" /></linearGradient>
        <linearGradient id="storeA" x2="0" y2="1"><stop offset="0" stop-color="#20c4fb" /><stop offset="1" stop-color="#1d6bf0" /></linearGradient>
        <linearGradient id="wordA" x2="0" y2="1"><stop offset="0" stop-color="#3d76c3" /><stop offset="1" stop-color="#2a569c" /></linearGradient>
        <linearGradient id="xlA" x2="0" y2="1"><stop offset="0" stop-color="#2f9157" /><stop offset="1" stop-color="#1f7244" /></linearGradient>
        <linearGradient id="ghA" x2="0" y2="1"><stop offset="0" stop-color="#a04aa8" /><stop offset="1" stop-color="#4b2a83" /></linearGradient>
      </defs>
    </svg>
  </div>
</template>

<style>
body { margin: 0; overflow: hidden; }
</style>

<style scoped>
.desktop { width: 2560px; height: 1600px; overflow: hidden; display: flex; flex-direction: column; background: #02120f; font-family: "Open Sans", sans-serif; color: #333; }
.desktop svg { display: block; flex: none; }
.defs { position: absolute; }
h1, h2, h3, p { margin: 0; }
button { border: 0; padding: 0; color: #fff; background: #2e74cb; font: inherit; }
a { color: #448bc9; }

/* macOS menu bar */
.menubar { height: 44px; flex: none; display: flex; align-items: center; background: linear-gradient(90deg, #a0b8b0 0, #a2b9bb 330px, #a2bcc2 620px, #9fc2c2 1000px, #9dc1c1 1380px, #a1bac4 1640px, #a2bac3 1850px, #a0c2c6 2150px, #9fc2c0 2560px); font: 28px/44px Inter, sans-serif; letter-spacing: -.5px; color: #06090a; white-space: nowrap; }
.apple { width: 30px; height: 32px; margin-left: 40px; margin-top: -2px; fill: #06090a; }
.menus { margin-left: 39px; display: grid; grid-template-columns: 146px 82px 86px 100px 129px 181px 125px 84px 140px 80px; }
.menus span:first-child { font-weight: 700; letter-spacing: 0; }
.status { margin-left: auto; margin-right: 44px; display: flex; }
.gap1 { margin-left: 26px; } .gap2 { margin-left: 28px; } .gap3 { margin-left: 34px; } .gap4 { margin-left: 22px; } .gap5 { margin-left: 14px; } .gap6 { margin-left: 30px; } .gap7 { margin-left: 20px; }
.pct { width: 53px; margin-left: 17px; font-size: 23px; letter-spacing: -.4px; }
.clock { width: 177px; margin-left: 33px; }

/* browser chrome */
.window { height: 1458px; margin-top: 2px; flex: none; display: flex; flex-direction: column; border-radius: 10px; overflow: hidden; background: #fff; }
.tabstrip { height: 84px; flex: none; display: flex; background: #dee1e6; box-shadow: inset 0 2px #eceef1; font: 24px/32px Inter, sans-serif; letter-spacing: -.22px; color: #3f4246; }
.lights { width: 132px; padding-left: 26px; display: flex; gap: 16px; padding-top: 31px; }
.lights i { width: 24px; height: 24px; border-radius: 50%; box-sizing: border-box; border: 1px solid rgba(0, 0, 0, .12); }
.red { background: #ff605c; } .yellow { background: #ffbd44; } .green { background: #28c840; }
.tab { width: 318.500px; height: 68px; margin-top: 16px; flex: none; box-sizing: border-box; padding-left: 24px; display: flex; align-items: center; position: relative; }
.lights + .tab { padding-left: 22px; }
.tab.divided { background: linear-gradient(#8b8e92, #8b8e92) right 0 top 15px / 2px 40px no-repeat; }
.tab.active { padding-left: 23px; background: #fff; border-radius: 16px 16px 0 0; }
.tab.active::before, .tab.active::after { content: ""; position: absolute; bottom: 0; width: 16px; height: 16px; }
.tab.active::before { left: -16px; background: radial-gradient(circle at 0 0, transparent 15.500px, #fff 16px); }
.tab.active::after { right: -16px; background: radial-gradient(circle at 100% 0, transparent 15.500px, #fff 16px); }
.fav { width: 32px; height: 32px; font-family: "Liberation Sans", sans-serif; letter-spacing: 0; }
.title { width: 194px; margin-left: 16px; overflow: hidden; white-space: nowrap; mask-image: linear-gradient(90deg, #000 148px, transparent 194px); }
.x { width: 20px; height: 20px; margin-left: 12px; }
.lights + .tab .x { margin-left: 14px; }
.plus { width: 26px; height: 26px; margin: 37px 0 0 31px; }
.toolbar { height: 72px; flex: none; display: flex; align-items: center; padding-left: 24px; border-bottom: 2px solid #dadce0; }
.nav { width: 40px; height: 40px; margin-right: 24px; }
.omnibox { width: 1998px; height: 56px; margin-left: 1px; border-radius: 28px; background: #f1f3f4; display: flex; align-items: center; font: 28px/56px Inter, sans-serif; letter-spacing: -.09px; color: #66696d; }
.lock { width: 25px; height: 25px; margin-left: 22px; }
.url { margin-left: 20px; }
.url b { font-weight: 400; color: #202124; }
.star { width: 36px; height: 36px; margin-left: auto; margin-right: 17px; }
.ext { width: 32px; height: 32px; }
.e1 { margin-left: 29px; } .e2 { margin-left: 33px; } .e3 { width: 36px; height: 36px; margin-left: 29px; }
.profile { width: 44px; height: 44px; margin-left: 24px; border-radius: 50%; background: #f4511e; color: #fff; font: 24px/42px Inter, sans-serif; text-align: center; }
.dots { width: 8px; height: 28px; margin-left: 38px; fill: #5f6368; }

/* site header */
.page { flex: 1; min-height: 0; display: flex; flex-direction: column; position: relative; }
.topnav { height: 128px; flex: none; display: flex; align-items: center; border-bottom: 2px solid #e1e1e1; }
.logo { width: 254px; margin-left: 48px; display: flex; align-items: center; color: #2a73cc; font: 900 66px/66px Lato, sans-serif; letter-spacing: -.2px; -webkit-text-stroke: 2px #2a73cc; }
.logo svg { width: 72px; height: 40px; }
.logo span { margin-top: -19px; }
.explore { width: 184px; height: 72px; margin-left: 48px; margin-top: 4px; border-radius: 4px; display: flex; align-items: center; padding-left: 31px; font-size: 28px; font-weight: 700; letter-spacing: -.25px; box-sizing: border-box; }
.explore svg { width: 16px; height: 11px; margin-left: 14px; margin-top: 3px; }
.search { width: 580px; height: 80px; margin-left: 36px; margin-top: 4px; display: flex; }
.field { width: 500px; height: 80px; box-sizing: border-box; border: 2px solid #e1e1e1; border-right: 0; border-radius: 4px 0 0 4px; padding-left: 20px; font-size: 32px; font-weight: 300; line-height: 73px; letter-spacing: -.18px; color: #444; }
.search button { width: 80px; height: 80px; border-radius: 0 4px 4px 0; }
.search button svg { width: 34px; height: 34px; margin-left: 19px; }
.bell { width: 46px; height: 50px; margin-left: 833px; margin-top: 11px; }
.vr { width: 4px; height: 80px; margin-left: 41px; margin-top: 4px; background: #e1e1e1; }
.avatar { width: 80px; height: 80px; margin-left: 48px; margin-top: 4px; }
.user { margin-left: 12px; margin-top: 2px; width: 123px; font-size: 28px; }
.chev { width: 22px; height: 12px; margin-top: 8px; }
.crumbs { height: 88px; flex: none; display: flex; align-items: center; padding-left: 64px; border-bottom: 2px solid #dcdcdc; font: 24px/36px "Liberation Sans", sans-serif; color: #333; white-space: nowrap; }
.crumbs svg { width: 10px; height: 18px; margin: 4px 14px 0 16px; }
.crumbs a { width: 266px; letter-spacing: .05px; }
.crumbs .week { width: 80px; letter-spacing: -.3px; }
.crumbs > span { letter-spacing: .1px; }

/* course outline */
.body { flex: 1; min-height: 0; display: flex; overflow: hidden; }
.sidebar { width: 480px; flex: none; border-right: 2px solid #c6c6c6; }
h2 { margin: 24px 0 0 48px; font-size: 28px; line-height: 40px; color: #1f1f1f; }
h2.first { margin-top: 43px; }
h2:not(.first) { margin-bottom: 12px; }
.lesson { display: flex; padding: 16px 0 16px 49px; font-size: 24px; line-height: 36px; }
.lesson p { white-space: pre-line; }
.lesson small { display: block; margin-top: 4px; font-size: 24px; color: #757575; }
.lesson.current { background: #f5f5f5; border-left: 12px solid #2e74cb; padding-left: 37px; }
.lesson .check { width: 38px; height: 38px; margin: 4px 25px 0 0; }
.rail { width: 76px; flex: none; background: #f5f5f5; box-shadow: 0 0 8px 2px rgba(0, 0, 0, .38); clip-path: inset(0 -16px 0 0); z-index: 1; }
.tile { height: 76px; margin-top: 20px; background: #fff; border-radius: 3px; }
.tile svg { width: 36px; height: 36px; padding: 17px 0 0 17px; }

/* quiz */
.content { width: 1571px; margin-left: 233px; padding-top: 123px; }
.eyebrow { margin-left: 71px; font-size: 24px; font-weight: 700; line-height: 36px; }
h1 { margin: 37px 0 0 71px; font-size: 68px; line-height: 92px; white-space: nowrap; }
h3 { font: 700 28px/38px "Liberation Sans", sans-serif; height: 36px; }
.step { display: flex; }
.step .check { width: 46px; height: 46px; margin-right: 25px; }
.row { flex: 1; display: flex; justify-content: space-between; border-bottom: 2px solid #e1e1e1; box-sizing: border-box; }
.one { margin-top: 235px; }
.one .row { height: 111px; padding-top: 7px; }
.one h3 { letter-spacing: -.12px; }
.again { margin: 20px 34px 0 0; color: #2e74cb; font: 700 24px/36px "Liberation Sans", sans-serif; letter-spacing: .5px; }
.two .check { margin-top: 45px; }
.two .row { height: 252px; }
.receive { padding-top: 52px; }
.receive h3 { letter-spacing: .06px; }
.receive p { margin-top: 19px; font-size: 24px; line-height: 36px; color: #525252; }
.receive b { margin-right: 16px; }
.grade { width: 512px; height: 180px; margin-top: 34px; box-sizing: border-box; border-left: 2px solid #e1e1e1; padding-left: 44px; display: flex; }
.score { width: 105px; padding-top: 18px; }
.score span { display: block; margin-top: 14px; font: 40px/48px "Liberation Sans", sans-serif; letter-spacing: .2px; color: #258455; }
.feedback { flex: 1; padding: 24px 6px 0 0; display: flex; flex-direction: column; align-items: flex-end; white-space: nowrap; font-size: 24px; line-height: 36px; }
.feedback button { width: 252px; height: 72px; border-radius: 4px; font: 700 24px/72px "Liberation Sans", sans-serif; letter-spacing: .95px; }
.feedback span { margin-top: 17px; }
.react { display: flex; justify-content: flex-end; margin-top: 57px; padding-right: 10px; gap: 35px; }
.react svg:first-child { margin-right: 1px; }
.down { transform: scaleY(-1); }

/* timezone notice floats over the page */
.toast { position: absolute; left: 1840px; top: 160px; width: 700px; height: 236px; box-sizing: border-box; border: 2px solid #e5e5e5; border-radius: 6px; background: #fff; display: flex; align-items: flex-start; font: 24px/34px "Liberation Sans", sans-serif; color: #373a45; }
.warn { width: 48px; height: 42px; margin: 51px 0 0 48px; }
.msg { width: 486px; margin: 47px 0 0 32px; display: flex; flex-direction: column; letter-spacing: .19px; white-space: nowrap; }
.msg a { letter-spacing: .03px; }
.close { width: 34px; height: 34px; margin: 42px 0 0 15px; }
.shade { position: absolute; left: 0; right: 0; bottom: 0; height: 110px; background: linear-gradient(transparent, rgba(0, 0, 0, .065)); mask-image: linear-gradient(90deg, transparent, #000 90px, #000 2470px, transparent); }

/* dock */
.dock { width: 2444px; height: 94px; margin: 2px 0 0 58px; flex: none; box-sizing: border-box; padding-left: 6px; display: flex; border-radius: 14px 14px 0 0; background: linear-gradient(90deg, #405f5b 0, #41605d 300px, #425e64 560px, #3e6464 780px, #3f6762 900px, #48795a 1110px, #67637a 1220px, #566878 1330px, #715a7b 1450px, #645a72 1540px, #48755f 1680px, #41685b 1740px, #435d5e 1860px, #44545b 2000px, #44534f 2200px, #43514e 2444px); font-family: Inter, sans-serif; }
.app { width: 76.200px; height: 94px; }
.mono { font-family: "DejaVu Sans Mono", monospace; }
.divider { width: 2px; height: 70px; margin: 12px 16.500px 0 17px; background: rgba(0, 20, 20, .75); }
</style>
